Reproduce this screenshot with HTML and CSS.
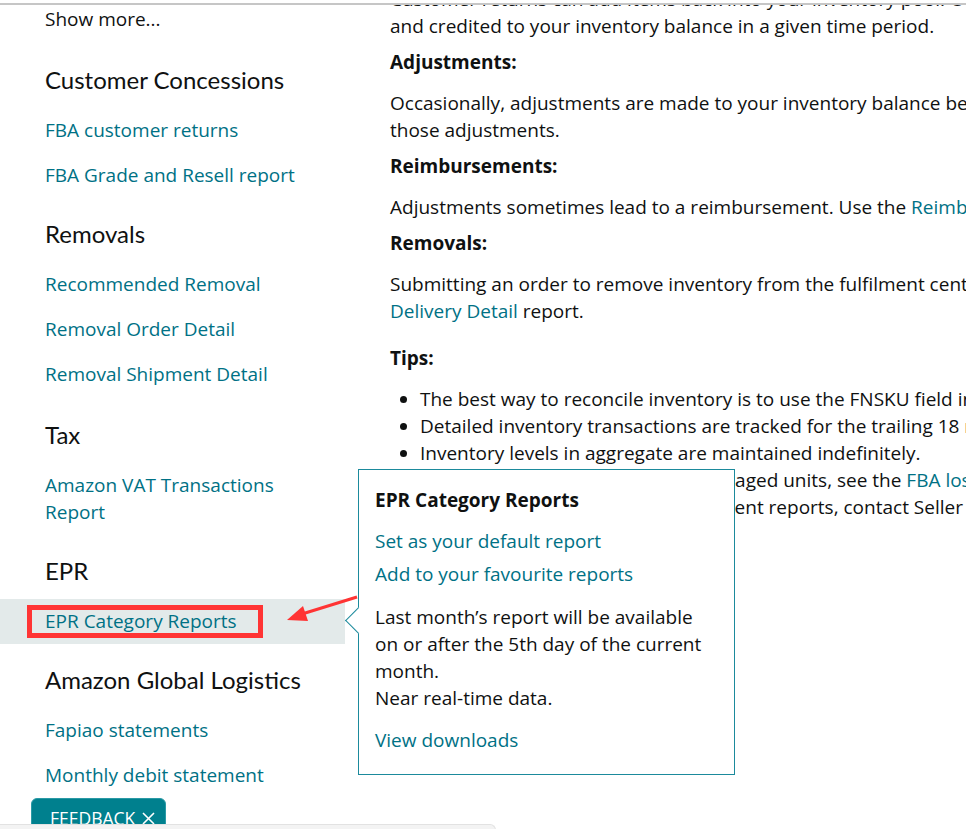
FILE: index.html
```html
<!DOCTYPE html>
<html lang="en">
<head>
  <meta charset="UTF-8">
  <title>Inventory Reports</title>
  <meta name="viewport" content="width=device-width, initial-scale=1.0">
  <link rel="stylesheet" href="styles.css">
</head>
<body>

  <div class="topline"></div>

  <div class="page">
    <div class="sidebar">
      <div class="item plain">Show more...</div>

      <h3>Customer Concessions</h3>
      <a class="item" href="#">FBA customer returns</a>
      <a class="item" href="#">FBA Grade and Resell report</a>

      <h3>Removals</h3>
      <a class="item" href="#">Recommended Removal</a>
      <a class="item" href="#">Removal Order Detail</a>
      <a class="item" href="#">Removal Shipment Detail</a>

      <h3 class="gap">Tax</h3>
      <a class="item" href="#">Amazon VAT Transactions<br>Report</a>

      <h3>EPR</h3>
      <a class="item active" href="#">EPR Category Reports</a>

      <h3>Amazon Global Logistics</h3>
      <a class="item" href="#">Fapiao statements</a>
      <a class="item" href="#">Monthly debit statement</a>
    </div>

    <div class="main">
      <p>Customer returns can add items back into your inventory pool. Our reports show the units received<br>
        and credited to your inventory balance in a given time period.</p>

      <h4>Adjustments:</h4>
      <p>Occasionally, adjustments are made to your inventory balance because of damaged or lost units. See<br>
        those adjustments.</p>

      <h4>Reimbursements:</h4>
      <p>Adjustments sometimes lead to a reimbursement. Use the <a href="#">Reimbursements</a> report to see them.</p>

      <h4>Removals:</h4>
      <p>Submitting an order to remove inventory from the fulfilment centre is tracked in the <a href="#">Removal</a><br>
        <a href="#">Delivery Detail</a> report.</p>

      <h4 class="tips">Tips:</h4>
      <ul>
        <li>The best way to reconcile inventory is to use the FNSKU field in each report.</li>
        <li>Detailed inventory transactions are tracked for the trailing 18 months.</li>
        <li>Inventory levels in aggregate are maintained indefinitely.</li>
        <li>For reimbursements on lost or damaged units, see the <a href="#">FBA lost and damaged inventory</a> report.</li>
        <li>For more information on the fulfilment reports, contact Seller Support.</li>
      </ul>
    </div>
  </div>

  <div class="popover">
    <div class="notch"></div>
    <div class="pop-title">EPR Category Reports</div>
    <a class="pop-link" href="#">Set as your default report</a>
    <a class="pop-link" href="#">Add to your favourite reports</a>
    <p class="pop-text">Last month’s report will be available<br>on or after the 5th day of the current<br>month.<br>Near real-time data.</p>
    <a class="pop-link" href="#">View downloads</a>
  </div>

  <svg class="markup" width="966" height="829" viewBox="0 0 966 829">
    <rect x="29.5" y="607.5" width="231" height="28" fill="none" stroke="#ff3434" stroke-width="5"/>
    <line x1="357" y1="597" x2="302" y2="614" stroke="#ff3434" stroke-width="3"/>
    <polygon points="287,620 303,606 308,621" fill="#ff3434"/>
  </svg>

  <div class="feedback">
    FEEDBACK
    <svg class="close" width="13" height="13" viewBox="0 0 13 13">
      <path d="M1 1 L12 12 M12 1 L1 12" stroke="#ffffff" stroke-width="1.6" fill="none"/>
    </svg>
  </div>
  <div class="bottombar"></div>

</body>
</html>
```

FILE: styles.css
```css
body {
  margin: 0;
  font-family: "Open Sans", Lato, sans-serif;
  font-size: 19px;
  color: #0f1111;
  background-color: #ffffff;
  overflow: hidden;
  height: 829px;
  position: relative;
}

a {
  color: #007185;
  text-decoration: none;
}

.topline {
  position: fixed;
  top: 0;
  left: 0;
  right: 0;
  height: 3px;
  background: #ffffff;
  border-bottom: 2px solid #c6c6c6;
  z-index: 5;
}

.page {
  display: flex;
  margin-top: -14px;
  width: 1500px;
}

/* left navigation */

.sidebar {
  flex: none;
  width: 345px;
  padding-top: 11px;
  display: flex;
  flex-direction: column;
}

.sidebar h3 {
  margin: 20px 0 12px 45px;
  font-family: Lato, "Open Sans", sans-serif;
  font-size: 24px;
  line-height: 32px;
  font-weight: normal;
  color: #0f1111;
}

.sidebar h3.gap {
  margin-top: 22px;
}

.item {
  display: block;
  padding: 9px 0 9px 45px;
  line-height: 27px;
}

.item.plain {
  color: #0f1111;
  margin-bottom: 2px;
}

.item.active {
  background-color: #e3eaea;
}

/* main text */

.main {
  flex: none;
  padding-left: 45px;
  white-space: nowrap;
  line-height: 27px;
}

.main p {
  margin: 0 0 9px 0;
}

.main h4 {
  margin: 0 0 14px 0;
  font-size: 19px;
  line-height: 27px;
  font-weight: bold;
}

.main h4.tips {
  margin-top: 20px;
}

.main ul {
  margin: 0;
  padding-left: 30px;
}

/* popover */

.popover {
  position: absolute;
  left: 358px;
  top: 469px;
  width: 377px;
  box-sizing: border-box;
  padding: 17px 16px 14px 16px;
  background: #ffffff;
  border: 1px solid #1b8a9c;
  line-height: 27px;
  z-index: 3;
}

.notch {
  position: absolute;
  left: -10px;
  top: 141px;
  width: 18px;
  height: 18px;
  background: #ffffff;
  border-left: 1px solid #1b8a9c;
  border-bottom: 1px solid #1b8a9c;
  transform: rotate(45deg);
}

.pop-title {
  font-weight: bold;
  margin-bottom: 14px;
}

.pop-link {
  display: block;
  margin-bottom: 6px;
}

.pop-text {
  margin: 16px 0 15px 0;
}

.markup {
  position: absolute;
  left: 0;
  top: 0;
  pointer-events: none;
  z-index: 4;
}

/* bottom widgets */

.feedback {
  position: fixed;
  left: 31px;
  top: 798px;
  width: 135px;
  height: 40px;
  box-sizing: border-box;
  padding: 8px 0 0 18px;
  display: flex;
  align-items: flex-start;
  gap: 7px;
  background: #00808e;
  border: 1px solid #2a9aa6;
  border-radius: 6px 6px 0 0;
  color: #ffffff;
  font-size: 17.5px;
  line-height: 22px;
  z-index: 6;
}

.feedback .close {
  margin-top: 5px;
}

.bottombar {
  position: fixed;
  left: 0;
  top: 824px;
  width: 495px;
  height: 10px;
  background: #f3f3f3;
  border-top: 1px solid #e2e2e2;
  border-right: 1px solid #e2e2e2;
  border-radius: 0 6px 0 0;
  z-index: 7;
}
```
